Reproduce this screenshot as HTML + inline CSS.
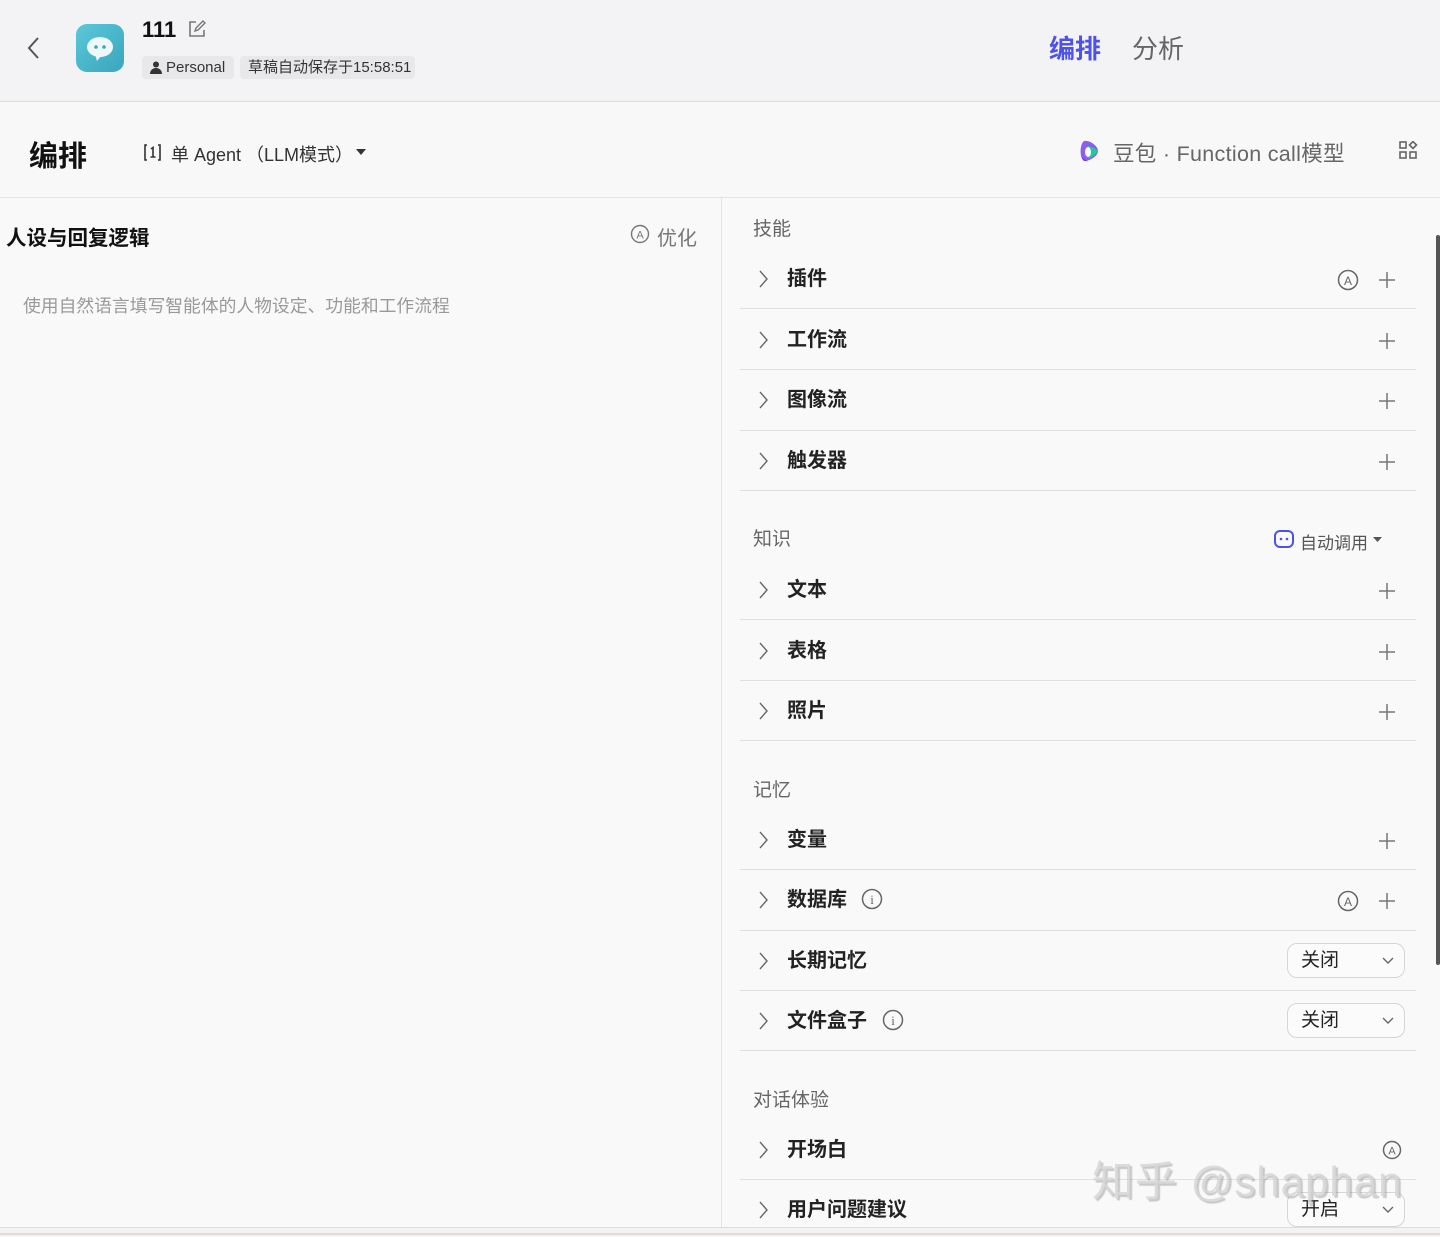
<!DOCTYPE html>
<html><head><meta charset="utf-8"><style>
*{margin:0;padding:0;box-sizing:border-box}
body{width:1440px;height:1237px;overflow:hidden;background:#f9f9f9;font-family:"Liberation Sans","Noto Sans CJK SC",sans-serif;position:relative;color:#1f1f1f}
.a{position:absolute;white-space:nowrap}
.hdr{position:absolute;left:0;top:0;width:1440px;height:102px;background:#f3f3f5;border-bottom:1px solid #dedee2}
.bar{position:absolute;left:0;top:103px;width:1440px;height:95px;background:#f8f8f8;border-bottom:1px solid #e2e2e2}
.vl{position:absolute;left:721px;top:198px;width:1px;height:1030px;background:#e3e3e3}
.hr{position:absolute;left:740px;width:676px;height:1px;background:#e0e0e0}
.sec{position:absolute;left:753px;font-size:19px;color:#666;line-height:20px}
.it{position:absolute;left:787px;font-size:20px;font-weight:bold;color:#222;line-height:22px}
.sel{position:absolute;left:1287px;width:118px;height:35px;border:1px solid #d6d6d6;border-radius:10px;background:#fbfbfb;font-size:19px;color:#222;padding-left:13px;line-height:33px}
</style></head><body>
<div class="hdr"></div>
<svg class="a" style="left:26px;top:36px" width="16" height="24" viewBox="0 0 16 24"><path d="M12 2 L3 12 L12 22" fill="none" stroke="#555" stroke-width="2"/></svg>
<div class="a" style="left:76px;top:24px;width:48px;height:48px;border-radius:11px;background:linear-gradient(135deg,#5bc7d9,#3aa6bd)"></div>
<svg class="a" style="left:84px;top:34px" width="32" height="30" viewBox="0 0 32 30"><ellipse cx="16" cy="13" rx="13" ry="10" fill="#eef8fa"/><path d="M11 20 L13 27 L18 21Z" fill="#eef8fa"/><circle cx="12" cy="13" r="1.8" fill="#3aa6bd"/><circle cx="20" cy="13" r="1.8" fill="#3aa6bd"/></svg>
<div class="a" style="left:142px;top:17px;font-size:22px;font-weight:bold;color:#111">111</div>
<svg class="a" style="left:187px;top:19px" width="20" height="20" viewBox="0 0 20 20"><path d="M9 3H3v14h14v-6" fill="none" stroke="#777" stroke-width="1.6"/><path d="M8 12l1-3 7-7 2 2-7 7z" fill="none" stroke="#777" stroke-width="1.4"/></svg>
<div class="a" style="left:142px;top:56px;height:23px;width:92px;background:#e8e8ea;border-radius:4px;font-size:15px;color:#333;line-height:23px;padding-left:24px">Personal</div>
<svg class="a" style="left:150px;top:61px" width="12" height="13" viewBox="0 0 12 13"><circle cx="6" cy="3.5" r="3" fill="#333"/><path d="M0 13c0-4 3-6 6-6s6 2 6 6z" fill="#333"/></svg>
<div class="a" style="left:240px;top:56px;height:23px;width:175px;background:#e8e8ea;border-radius:4px;font-size:15px;color:#333;line-height:23px;padding-left:8px">草稿自动保存于15:58:51</div>
<div class="a" style="left:1049px;top:29px;font-size:26px;font-weight:bold;color:#4d53e8">编排</div>
<div class="a" style="left:1132px;top:29px;font-size:26px;color:#666">分析</div>

<div class="bar"></div>
<div class="a" style="left:29px;top:133px;font-size:29px;font-weight:bold;color:#111">编排</div>
<svg class="a" style="left:143px;top:143px" width="19" height="19" viewBox="0 0 19 19"><path d="M4 2H2v15h2M15 2h2v15h-2" fill="none" stroke="#333" stroke-width="1.6"/><path d="M8 6l2-1.5V14M7.5 14h5" fill="none" stroke="#333" stroke-width="1.6"/></svg>
<div class="a" style="left:171px;top:141px;font-size:18px;color:#333">单 Agent （LLM模式）</div>
<svg class="a" style="left:356px;top:148px" width="10" height="8" viewBox="0 0 10 8"><path d="M0 1h10L5 7z" fill="#333"/></svg>
<svg class="a" style="left:1076px;top:138px" width="26" height="26" viewBox="0 0 26 26"><path d="M8 3c6-1 14 5 14 10s-8 10-14 10C4 21 3 7 8 3z" fill="#8f5cf0"/><path d="M12 8c5 1 10 4 10 5-2 3-6 7-10 7z" fill="#22c8a0"/><path d="M4 10c0 7 2 12 8 13-5 1-8-5-8-13z" fill="#2a2fd8"/><ellipse cx="12" cy="14" rx="3" ry="5" fill="#fff"/></svg>
<div class="a" style="left:1113px;top:137px;font-size:21.5px;color:#666;letter-spacing:0.3px">豆包 · Function call模型</div>
<svg class="a" style="left:1399px;top:141px" width="19" height="19" viewBox="0 0 19 19"><g fill="none" stroke="#666" stroke-width="1.6"><rect x="1" y="1" width="6" height="6"/><rect x="1" y="11" width="6" height="6"/><rect x="11" y="11" width="6" height="6"/><path d="M14 0.5l3.5 3.5L14 7.5 10.5 4z"/></g></svg>

<div class="vl"></div>
<div class="a" style="left:6px;top:221px;font-size:20.5px;font-weight:bold;color:#111">人设与回复逻辑</div>
<svg class="a" style="left:630px;top:224px" width="20" height="20" viewBox="0 0 20 20"><circle cx="10" cy="10" r="8.5" fill="none" stroke="#777" stroke-width="1.4"/><text x="10" y="14.5" text-anchor="middle" font-size="11" fill="#777" font-family="Liberation Sans">A</text></svg>
<div class="a" style="left:657px;top:222px;font-size:20px;color:#777">优化</div>
<div class="a" style="left:23px;top:292px;font-size:17.8px;color:#999">使用自然语言填写智能体的人物设定、功能和工作流程</div>

<div class="sec" style="top:220px">技能</div>
<div class="sec" style="top:530px">知识</div>
<div class="sec" style="top:781px">记忆</div>
<div class="sec" style="top:1091px">对话体验</div>

<div class="it" style="top:268px">插件</div>
<div class="it" style="top:329px">工作流</div>
<div class="it" style="top:389px">图像流</div>
<div class="it" style="top:450px">触发器</div>
<div class="it" style="top:579px">文本</div>
<div class="it" style="top:640px">表格</div>
<div class="it" style="top:700px">照片</div>
<div class="it" style="top:829px">变量</div>
<div class="it" style="top:889px">数据库</div>
<div class="it" style="top:950px">长期记忆</div>
<div class="it" style="top:1010px">文件盒子</div>
<div class="it" style="top:1139px">开场白</div>
<div class="it" style="top:1199px">用户问题建议</div>

<svg class="a" style="left:0;top:0;pointer-events:none" width="1440" height="1237">
<g fill="none" stroke="#666" stroke-width="1.4">
<path d="M760 271l7 8-7 8M760 332l7 8-7 8M760 392l7 8-7 8M760 453l7 8-7 8M760 582l7 8-7 8M760 643l7 8-7 8M760 703l7 8-7 8M760 832l7 8-7 8M760 892l7 8-7 8M760 953l7 8-7 8M760 1013l7 8-7 8M760 1142l7 8-7 8M760 1202l7 8-7 8"/>
</g>
<g stroke="#777" stroke-width="1.5">
<path d="M1387 272v16M1379 280h16M1387 333v16M1379 341h16M1387 393v16M1379 401h16M1387 454v16M1379 462h16M1387 583v16M1379 591h16M1387 644v16M1379 652h16M1387 704v16M1379 712h16M1387 833v16M1379 841h16M1387 893v16M1379 901h16"/>
</g>
<g fill="none" stroke="#666" stroke-width="1.5">
<circle cx="1348" cy="280" r="9.5"/><circle cx="1348" cy="901" r="9.5"/><circle cx="1392" cy="1150" r="8.5"/>
<circle cx="872" cy="899" r="9.5"/><circle cx="893" cy="1020" r="9.5"/>
</g>
<g font-family="Liberation Sans" fill="#666" text-anchor="middle">
<text x="1348" y="285" font-size="12">A</text><text x="1348" y="906" font-size="12">A</text><text x="1392" y="1154.5" font-size="11">A</text>
<text x="872" y="904" font-size="13" font-family="Liberation Serif">i</text><text x="893" y="1025" font-size="13" font-family="Liberation Serif">i</text>
</g>
<rect x="1275" y="531" width="18" height="16" rx="5" fill="none" stroke="#4d53e8" stroke-width="2"/>
<circle cx="1281" cy="539" r="1.3" fill="#4d53e8"/><circle cx="1287" cy="539" r="1.3" fill="#4d53e8"/>
<path d="M1373 537h9l-4.5 5z" fill="#555"/>
</svg>
<div class="a" style="left:1300px;top:529px;font-size:17px;color:#555">自动调用</div>

<div class="hr" style="top:308px"></div>
<div class="hr" style="top:369px"></div>
<div class="hr" style="top:430px"></div>
<div class="hr" style="top:490px"></div>
<div class="hr" style="top:619px"></div>
<div class="hr" style="top:680px"></div>
<div class="hr" style="top:740px"></div>
<div class="hr" style="top:869px"></div>
<div class="hr" style="top:930px"></div>
<div class="hr" style="top:990px"></div>
<div class="hr" style="top:1050px"></div>
<div class="hr" style="top:1179px"></div>

<div class="sel" style="top:943px">关闭</div>
<div class="sel" style="top:1003px">关闭</div>
<div class="sel" style="top:1192px">开启</div>
<svg class="a" style="left:0;top:0;pointer-events:none" width="1440" height="1237"><g fill="none" stroke="#666" stroke-width="1.4"><path d="M1383 958l5 5 5-5M1383 1018l5 5 5-5M1383 1207l5 5 5-5"/></g></svg>

<div class="a" style="left:1436px;top:235px;width:4px;height:730px;background:#555;border-radius:2px"></div>
<div class="a" style="left:1092px;top:1148px;font-size:42px;color:rgba(215,215,215,0.85);letter-spacing:1px;text-shadow:2px 2px 1px rgba(140,140,140,0.45)">知乎 @shaphan</div>
<div class="a" style="left:0;top:1227px;width:1440px;height:10px;background:#f3f3f3;border-top:1px solid #ddd"></div>
<div class="a" style="left:0;top:1233px;width:1440px;height:2px;background:#ead8d8"></div>
</body></html>
